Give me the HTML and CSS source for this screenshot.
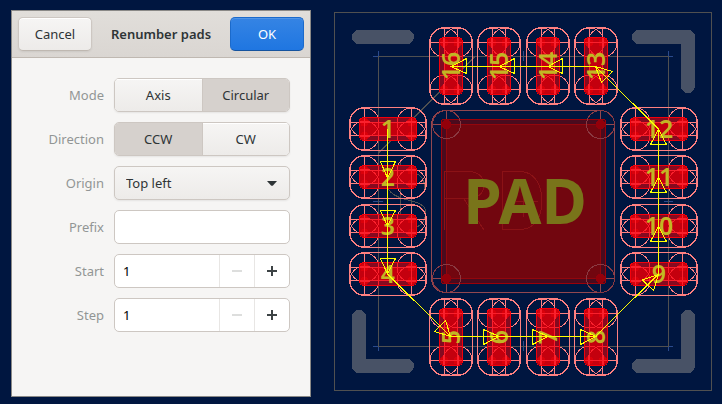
FILE: index.html
```html
<!DOCTYPE html>
<html lang="en">
<head>
<meta charset="utf-8">
<title>Renumber pads</title>
<link rel="stylesheet" href="styles.css">
</head>
<body>
<main class="editor">
  <form class="dialog">
    <header class="titlebar">
      <button type="button" class="btn cancel">Cancel</button>
      <h1 class="title">Renumber pads</h1>
      <button type="button" class="btn ok">OK</button>
    </header>
    <div class="fields">
      <span class="label" id="mode">Mode</span>
      <div class="segmented" role="group" aria-labelledby="mode">
        <button type="button" class="segment" aria-pressed="false">Axis</button>
        <button type="button" class="segment" aria-pressed="true">Circular</button>
      </div>
      <span class="label" id="direction">Direction</span>
      <div class="segmented" role="group" aria-labelledby="direction">
        <button type="button" class="segment" aria-pressed="true">CCW</button>
        <button type="button" class="segment" aria-pressed="false">CW</button>
      </div>
      <label class="label" for="origin">Origin</label>
      <div class="dropdown">
        <select id="origin"><option>Top left</option></select>
        <svg class="caret" viewBox="0 0 10 5" aria-hidden="true"><path d="M0 0H10L6 4.500Q5 5.200 4 4.500Z"/></svg>
      </div>
      <label class="label" for="prefix">Prefix</label>
      <input class="entry" id="prefix" type="text">
      <label class="label" for="start">Start</label>
      <div class="spin">
        <input id="start" type="number" value="1" min="1">
        <button type="button" aria-label="Decrease start" disabled><svg viewBox="0 0 10 10"><path d="M0 5H10"/></svg></button>
        <button type="button" aria-label="Increase start"><svg viewBox="0 0 10 10"><path d="M0 5H10M5 0V10"/></svg></button>
      </div>
      <label class="label" for="step">Step</label>
      <div class="spin">
        <input id="step" type="number" value="1" min="1">
        <button type="button" aria-label="Decrease step" disabled><svg viewBox="0 0 10 10"><path d="M0 5H10"/></svg></button>
        <button type="button" aria-label="Increase step"><svg viewBox="0 0 10 10"><path d="M0 5H10M5 0V10"/></svg></button>
      </div>
    </div>
  </form>

  <svg class="board" viewBox="311 0 411 404" role="img" aria-label="Package layout">
    <defs>
      <clipPath id="copper"><rect x="-28" y="-11" width="56" height="22"/></clipPath>
      <g id="courtyard">
        <rect x="-38.5" y="-21.5" width="77" height="43" rx="15"/>
        <circle cx="-23.5" cy="-6.5" r="14.500"/><circle cx="23.5" cy="-6.5" r="14.500"/>
        <circle cx="-23.5" cy="6.5" r="14.500"/><circle cx="23.5" cy="6.5" r="14.500"/>
        <path d="M-23.5-21.500V21.500M23.500-21.500V21.500M-38.500-6.500H38.500M-38.500 6.500H38.500"/>
      </g>
      <g id="pad">
        <use href="#courtyard" class="mask"/>
        <rect class="pad-fill" x="-28.5" y="-11.5" width="57" height="23" rx="4"/>
        <path class="pad-core" d="M-28-6.500H28V6.500H-28Z"/>
        <g class="pad-core"><circle cx="-23.5" cy="-6.5" r="5"/><circle cx="23.5" cy="-6.5" r="5"/><circle cx="-23.5" cy="6.5" r="5"/><circle cx="23.5" cy="6.5" r="5"/></g>
        <g class="pad-dots"><circle cx="-23.5" cy="-6.5" r="4"/><circle cx="23.5" cy="-6.5" r="4"/><circle cx="-23.5" cy="6.5" r="4"/><circle cx="23.5" cy="6.5" r="4"/></g>
        <g clip-path="url(#copper)"><use href="#courtyard" class="mask-on-copper"/></g>
        <rect class="pad-edge" x="-28.5" y="-11.5" width="57" height="23" rx="4"/>
      </g>
    </defs>

    <g class="silk">
      <path d="M359 37H407M639 37H688V86M359 317V366H407M688 317V366H639"/>
    </g>
    <path class="marks" d="M373 56.500H383M378.500 51V61M664 56.500H673M668.500 51V61M373 346.500H383M378.500 341V351M664 346.500H673M668.500 341V351M523.500 51V61M523.500 341V351M373 201.500H383M664 201.500H673"/>
    <g class="outline">
      <rect x="334.5" y="12.5" width="377" height="378"/>
      <rect x="378.5" y="56.5" width="290" height="290"/>
      <path d="M475 56.500L378.500 153M400.500 160V240M411.500 160V240M388 189Q393 196 404 199C424 203 428 208 425 217Q422 228 411 228M411 172Q425 174 425 190"/>
    </g>

    <g class="thermal-mask">
      <rect x="431.5" y="110.5" width="183" height="182" rx="14"/>
      <path d="M446.500 110V124.500H431M600.500 110V124.500H615M446.500 293V278.500H431M600.500 293V278.500H615"/>
    </g>
    <rect class="thermal-edge" x="441.5" y="119.5" width="164" height="164" rx="2"/>
    <rect class="thermal" x="446.5" y="124.5" width="154" height="154"/>
    <path class="thermal-lines" d="M441 124.500H606M441 278.500H606M446.500 119V284M600.500 119V284"/>
    <g class="thermal-rings"><circle cx="446.5" cy="124.5" r="14"/><circle cx="600.5" cy="124.5" r="14"/><circle cx="446.5" cy="278.5" r="14"/><circle cx="600.5" cy="278.5" r="14"/></g>
    <g class="thermal-dots"><circle cx="446.5" cy="124.5" r="5"/><circle cx="600.5" cy="124.5" r="5"/><circle cx="446.5" cy="278.5" r="5"/><circle cx="600.5" cy="278.5" r="5"/></g>
    <path class="reference" d="M444.500 230V171.500H471Q484 174 484 185Q483 198 469 198.500H445M464 199L484 230M502.500 171.500V229.500H521C535 229 542 216 542 201S535 172 521 171.500ZM523.500 186V217M516 201.500H538"/>
    <text class="pad-name" x="525" y="224">PAD</text>

    <use href="#pad" x="388" y="129"/><use href="#pad" x="388" y="177"/><use href="#pad" x="388" y="226"/><use href="#pad" x="388" y="274"/>
    <use href="#pad" x="659" y="129"/><use href="#pad" x="659" y="177"/><use href="#pad" x="659" y="226"/><use href="#pad" x="659" y="274"/>
    <use href="#pad" transform="translate(451 66) rotate(90)"/><use href="#pad" transform="translate(499 66) rotate(90)"/><use href="#pad" transform="translate(548 66) rotate(90)"/><use href="#pad" transform="translate(596 66) rotate(90)"/>
    <use href="#pad" transform="translate(451 337) rotate(90)"/><use href="#pad" transform="translate(499 337) rotate(90)"/><use href="#pad" transform="translate(548 337) rotate(90)"/><use href="#pad" transform="translate(596 337) rotate(90)"/>

    <g class="numbers">
      <text x="388" y="138">1</text><text x="388" y="186">2</text><text x="388" y="235">3</text><text x="388" y="283">4</text>
      <text x="659" y="138">12</text><text x="659" y="186">11</text><text x="659" y="235">10</text><text x="659" y="283">9</text>
      <text transform="translate(460 66) rotate(-90)">16</text><text transform="translate(508 66) rotate(-90)">15</text><text transform="translate(557 66) rotate(-90)">14</text><text transform="translate(605 66) rotate(-90)">13</text>
      <text transform="translate(460 337) rotate(-90)">5</text><text transform="translate(508 337) rotate(-90)">6</text><text transform="translate(557 337) rotate(-90)">7</text><text transform="translate(605 337) rotate(-90)">8</text>
    </g>

    <g class="route">
      <path d="M387.500 129V274L450.500 336.500H595.500L658.500 274V129L595.500 66.500H451"/>
      <path d="M380.500 161.500H395.500L387.500 178ZM380.500 210.500H395.500L387.500 226ZM380.500 258.500H395.500L387.500 274Z"/>
      <path d="M434.500 331.500L445.500 320.500L450.500 336.500ZM642.500 280L653.500 290.500L658.500 274.500ZM612.500 71.500L601.500 82.500L595.500 66.500Z"/>
      <path d="M483.500 329.500V344.500L499 336.500ZM532.500 329.500V344.500L548 336.500ZM580.500 329.500V344.500L596 336.500Z"/>
      <path d="M650.500 241.500H666.500L658.500 226ZM650.500 192.500H666.500L658.500 177ZM650.500 144.500H666.500L658.500 129Z"/>
      <path d="M562.500 58.500V73.500L548 66.500ZM514.500 58.500V73.500L499 66.500ZM466.500 58.500V73.500L451 66.500Z"/>
    </g>
  </svg>
</main>
</body>
</html>
```
FILE: styles.css
```css
* { box-sizing: border-box; }

body {
  margin: 0;
  background: #001640;
  color: #2e3436;
  font: 13px/20px "Noto Sans", sans-serif;
}

button, input, select { font: inherit; color: inherit; margin: 0; }

.editor { display: flex; padding-left: 11px; }

.dialog {
  flex: 0 1 300px;
  min-width: 0;
  margin: 10px 0 7px;
  border: 1px solid #8a8987;
  background: #f6f5f4;
}

.titlebar {
  display: grid;
  grid-template-columns: 74px 1fr 74px;
  align-items: center;
  padding: 6px;
  border-bottom: 1px solid #bfb8b1;
  background: linear-gradient(#e1deda, #dad6d2);
}

.title { margin: 0; font-size: 13px; font-weight: 600; line-height: 20px; text-align: center; }

.btn {
  height: 34px;
  padding: 0;
  border: 1px solid #cdc7c2;
  border-bottom-color: #bfb8b1;
  border-radius: 5px;
  background: linear-gradient(#f6f5f4, #edebe9);
  box-shadow: inset 0 1px #fff, 0 1px 2px rgba(0, 0, 0, .07);
}

.ok {
  border-color: #1b6acb;
  border-bottom-color: #15539e;
  background: linear-gradient(#3584e4, #1f76e1);
  box-shadow: inset 0 1px #5095e7;
  color: #fff;
}

.fields {
  display: grid;
  grid-template-columns: 1fr 176px;
  grid-auto-rows: 34px;
  align-items: center;
  gap: 10px;
  padding: 20px 20px 64px;
}

.label { color: #929595; text-align: right; }

.segmented, .spin {
  display: flex;
  height: 34px;
  border: 1px solid #cdc7c2;
  border-radius: 5px;
  overflow: hidden;
}

.segmented, .dropdown select { box-shadow: 0 1px 2px rgba(0, 0, 0, .07); }

.segment {
  flex: 1;
  padding: 0;
  border: 0;
  background: linear-gradient(#f6f5f4, #edebe9);
  box-shadow: inset 0 1px #fff;
}

.segment + .segment { border-left: 1px solid #cdc7c2; }
.segment[aria-pressed="true"] { background: #d6d1cd; box-shadow: none; }

.dropdown { display: grid; align-items: center; }
.dropdown > * { grid-area: 1 / 1; }

.dropdown select {
  appearance: none;
  width: 100%;
  height: 34px;
  padding: 0 11px;
  border: 1px solid #cdc7c2;
  border-radius: 5px;
  background: linear-gradient(#f6f5f4, #edebe9);
}

.caret { width: 10px; height: 5px; margin-right: 13px; justify-self: end; fill: #2e3436; pointer-events: none; }

.entry {
  width: 100%;
  height: 34px;
  padding: 0 8px;
  border: 1px solid #cdc7c2;
  border-radius: 5px;
  background: #fff;
}

.spin { background: #fff; }

.spin input {
  appearance: textfield;
  flex: 1;
  min-width: 0;
  padding: 0 8px;
  border: 0;
  background: none;
  color: #000;
}

.spin input::-webkit-inner-spin-button { appearance: none; margin: 0; }

.spin button {
  display: grid;
  place-items: center;
  width: 35px;
  padding: 0;
  border: 0;
  border-left: 1px solid #e8e6e4;
  background: none;
}

.spin svg { width: 10px; height: 10px; stroke: #3d4345; stroke-width: 2; }
.spin button:disabled svg { stroke: #dddedd; }

.board { flex: 1; min-width: 0; align-self: flex-start; fill: none; stroke-width: 1; shape-rendering: crispEdges; }

.silk { stroke: #485266; stroke-width: 14; stroke-linecap: round; stroke-linejoin: round; }
.outline { stroke: #505050; }
.marks { stroke: #2b4a8c; }

.mask { stroke: #ff8080; }
.mask-on-copper { stroke: #fa202c; }
.pad-fill { fill: #850a20; }
.pad-core { fill: #c4000e; }
.pad-dots { fill: #da000a; }
.pad-edge { stroke: #f4000a; }

.thermal-mask { stroke: #93474f; }
.thermal-edge { fill: #4a0b1e; stroke: #9c0008; }
.thermal { fill: #72060f; }
.thermal-lines { stroke: #93060c; }
.thermal-rings { stroke: #8a3a42; }
.thermal-dots { fill: #93000a; }
.reference { stroke: #8b1216; }

.pad-name, .numbers { font-family: "Noto Sans", sans-serif; text-anchor: middle; }
.pad-name { fill: #79741a; font-size: 62px; font-weight: 700; }
.numbers { fill: #c2b624; font-size: 25px; font-weight: 600; }
.route { stroke: #ffff00; }
```
